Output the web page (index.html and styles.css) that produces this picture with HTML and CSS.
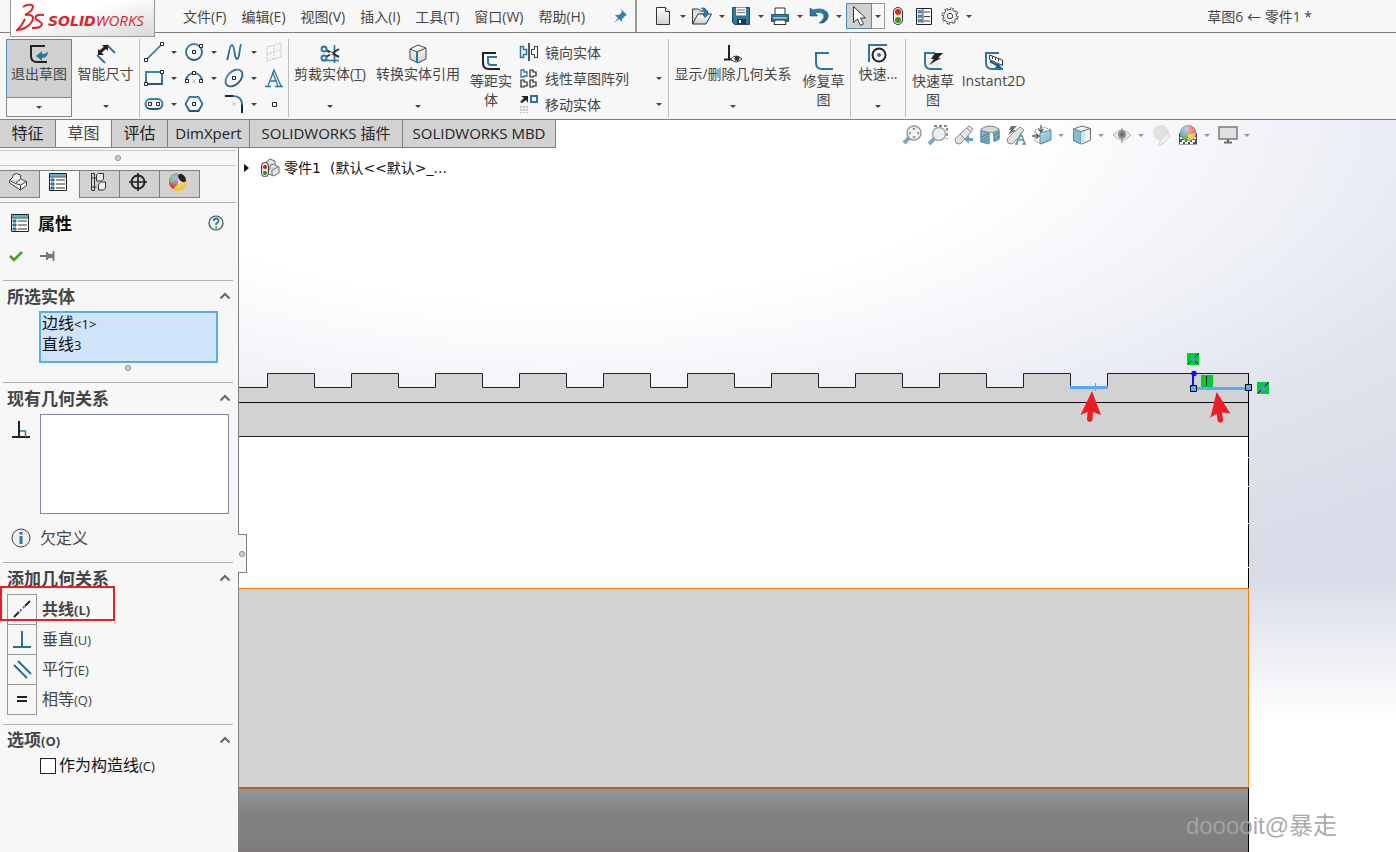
FILE: index.html
```html
<!DOCTYPE html>
<html lang="zh-CN">
<head>
<meta charset="utf-8">
<title>SOLIDWORKS</title>
<link rel="stylesheet" href="styles.css">
</head>
<body>
<svg class="defs" aria-hidden="true">
  <defs>
    <linearGradient id="blue" x1="0" y1="0" x2="0" y2="1"><stop offset="0" stop-color="#2f86b4"/><stop offset="1" stop-color="#245a78"/></linearGradient>
    <linearGradient id="light" x1="0" y1="0" x2="0" y2="1"><stop offset="0" stop-color="#ffffff"/><stop offset="1" stop-color="#cfcfcf"/></linearGradient>
    <linearGradient id="glass" x1="0" y1="0" x2="1" y2="1"><stop offset="0" stop-color="#aad8ee"/><stop offset="1" stop-color="#5fa8c8"/></linearGradient>
    <linearGradient id="base" gradientUnits="userSpaceOnUse" x1="0" y1="788" x2="0" y2="852"><stop offset="0" stop-color="#969696"/><stop offset="0.4" stop-color="#828282"/><stop offset="1" stop-color="#7f7b7d"/></linearGradient>
    <radialGradient id="shine" cx="0.4" cy="0.25" r="0.7"><stop offset="0" stop-color="#fff" stop-opacity="0.6"/><stop offset="1" stop-color="#fff" stop-opacity="0"/></radialGradient>
  </defs>
  <symbol id="i-exit" viewBox="0 0 20 20"><path d="M16 2H2v10q0 6 6 6h10" fill="none" stroke="#222" stroke-width="2"/><path d="M7 12l6-5v3q5 0 6-3 0 7-6 7v3z" fill="#2878a2"/></symbol>
  <symbol id="i-dim" viewBox="0 0 20 20"><path d="M1 11l8 8M11 1l8 8" stroke="#2b7399" stroke-width="1.800" fill="none"/><path d="M4 8l6-5" stroke="#222" stroke-width="3"/><path d="M2 11V5l6 6zM12 1v6L6 1z" fill="#222"/></symbol>
  <symbol id="i-line" viewBox="0 0 20 20"><path d="M2 18L18 2" stroke="#2878a2" stroke-width="1.7"/><path d="M.5 16.5h3v3h-3zM16.500.5h3v3h-3z" fill="#fff" stroke="#222"/></symbol>
  <symbol id="i-circle" viewBox="0 0 20 20"><circle cx="10" cy="10" r="8" fill="none" stroke="url(#blue)" stroke-width="1.8"/><path d="M8.500 8.500h3v3h-3zM15.500 2.500h3v3h-3z" fill="#fff" stroke="#222"/></symbol>
  <symbol id="i-spline" viewBox="0 0 20 20"><path d="M3 18C5 14 5 3 8 3s2 14 5 14 2-10 4-15" fill="none" stroke="url(#blue)" stroke-width="1.8"/></symbol>
  <symbol id="i-plane" viewBox="0 0 20 20"><path d="M3 5l14-4v14L3 19zM3 12l14-4M10 3v14" fill="none" stroke="#c4c4c4" stroke-dasharray="2 1"/></symbol>
  <symbol id="i-rect" viewBox="0 0 20 20"><path d="M2 4h16v12H2z" fill="none" stroke="url(#blue)" stroke-width="1.800"/><path d="M.5 14.500h3v3h-3zM16.500 2.500h3v3h-3z" fill="#fff" stroke="#222"/></symbol>
  <symbol id="i-arc" viewBox="0 0 20 20"><path d="M2 13a8 8 0 0 1 16 0" fill="none" stroke="url(#blue)" stroke-width="1.8"/><path d="M8 11l4 4m0-4l-4 4" stroke="#c4c4c4"/><path d="M1.500 11.500h3v3h-3zM15.500 11.500h3v3h-3zM8.500 3.500h3v3h-3z" fill="#fff" stroke="#222"/></symbol>
  <symbol id="i-ellipse" viewBox="0 0 20 20"><ellipse cx="10" cy="10" rx="10" ry="6.500" transform="rotate(-45 10 10)" fill="none" stroke="url(#blue)" stroke-width="1.8"/><path d="M8.500 8.500h3v3h-3z" fill="#fff" stroke="#222"/></symbol>
  <symbol id="i-text" viewBox="0 0 20 20"><path d="M1 18.500h6M11 18.500h8M4 18L10 2l7 16M8.500 4L14 18M6 13h7" fill="none" stroke="#2878a2" stroke-width="1.300"/></symbol>
  <symbol id="i-slot" viewBox="0 0 20 20"><rect x="1.500" y="5" width="17" height="10" rx="5" fill="none" stroke="url(#blue)" stroke-width="1.800"/><path d="M4.500 8.500h3v3h-3zM12.500 8.500h3v3h-3z" fill="#fff" stroke="#222"/></symbol>
  <symbol id="i-polygon" viewBox="0 0 20 20"><path d="M5.500 3h9l4 7-4 7h-9l-4-7z" fill="none" stroke="url(#blue)" stroke-width="1.800"/><path d="M8.500 8.500h3v3h-3z" fill="#fff" stroke="#222"/></symbol>
  <symbol id="i-fillet" viewBox="0 0 20 20"><path d="M1 2h8" stroke="#222" stroke-width="2"/><path d="M9 2q9 0 9 9" fill="none" stroke="url(#blue)" stroke-width="1.800"/><path d="M18 11v8" stroke="#222" stroke-width="2"/><path d="M8 8l4 4m0-4l-4 4" stroke="#c4c4c4"/></symbol>
  <symbol id="i-point" viewBox="0 0 20 20"><path d="M8.500 8.500h4v4h-4z" fill="#fff" stroke="#222"/></symbol>
  <symbol id="i-trim" viewBox="0 0 20 20"><path d="M14.500 1v18M2 16.500h17" stroke="#2878a2" stroke-width="1.700"/><path d="M6 6l13 7M6 13L19 5" stroke="#333" stroke-width="2"/><path d="M8 9.500l3-1.500 2 1.500-2 1.500z" fill="#fff"/><circle cx="4" cy="5" r="2.500" fill="none" stroke="#2878a2" stroke-width="2"/><circle cx="4" cy="14" r="2.500" fill="none" stroke="#2878a2" stroke-width="2"/></symbol>
  <symbol id="i-convert" viewBox="0 0 20 20"><path d="M2 5l8-4 8 3v11l-8 4-8-4z" fill="url(#light)" stroke="#444"/><path d="M2 5l7 3 9-4" fill="none" stroke="#444"/><path d="M9 8v11" stroke="#2878a2" stroke-width="2"/></symbol>
  <symbol id="i-offset" viewBox="0 0 20 20"><path d="M15 2H2v10q0 6 6 6h11" fill="none" stroke="#222" stroke-width="2"/><path d="M16 6H7v5q0 3 3 3h6" fill="none" stroke="#2878a2" stroke-width="2"/></symbol>
  <symbol id="i-mirror" viewBox="0 0 20 20"><path d="M1.500 4.500h3v3h3v5h-3v3h-3z" fill="none" stroke="#2878a2" stroke-width="1.500"/><path d="M10 1v18" stroke="#222" stroke-width="1.500"/><path d="M18.500 4.500h-3v3h-3v5h3v3h3z" fill="none" stroke="#333"/></symbol>
  <symbol id="i-pattern" viewBox="0 0 20 20"><path d="M2 2h3v2h3v4H5v1H2z" fill="none" stroke="#2878a2" stroke-width="1.300"/><path d="M11 2h3v2h3v4h-3v1h-3zM2 12h3v2h3v4H5v1H2zM11 12h3v2h3v4h-3v1h-3z" fill="none" stroke="#222" stroke-width="1.200"/></symbol>
  <symbol id="i-move" viewBox="0 0 20 20"><path d="M1 8l4-4-3-2h7v7L7 6 3 9z" fill="#222"/><path d="M12 2h6v6h-6z" fill="#fff" stroke="#2878a2" stroke-width="2"/><path d="M2 12v7M5 12v7M8 12v7" stroke="#c4c4c4" stroke-width="2" stroke-dasharray="2 1"/></symbol>
  <symbol id="i-relations" viewBox="0 0 20 20"><path d="M6 1v14M1 15.500h9" stroke="#222" stroke-width="2"/><path d="M8 15q5-6 11 0-6 6-11 0z" fill="#fff" stroke="#444"/><circle cx="14" cy="14.500" r="2.500" fill="#333"/></symbol>
  <symbol id="i-repair" viewBox="0 0 20 20"><path d="M15 2H2v10q0 6 6 6h11" fill="none" stroke="#2878a2" stroke-width="2"/></symbol>
  <symbol id="i-snap" viewBox="0 0 20 20"><path d="M1 18V1h18" fill="none" stroke="#2878a2" stroke-width="2"/><circle cx="11" cy="11" r="6.500" fill="none" stroke="#222" stroke-width="2"/><circle cx="11" cy="11" r="2" fill="#2878a2"/></symbol>
  <symbol id="i-rapid" viewBox="0 0 20 20"><path d="M4 8h15M4 13h15M9 3v16M14 6v13" stroke="#ddd"/><path d="M12 2H2v10q0 6 6 6h11" fill="none" stroke="#2878a2" stroke-width="2"/><path d="M12 2h8l-5 5h3L6 14l5-6H8z" fill="#222"/></symbol>
  <symbol id="i-instant" viewBox="0 0 20 20"><path d="M15 2H2v10q0 6 6 6h11" fill="none" stroke="#2878a2" stroke-width="2"/><path d="M5.500 4l13 5v5.500l-13-6z" fill="#fff" stroke="#333"/><path d="M8.500 5.500v2.500M11.500 6.500v2.500M14.500 8v2.500" stroke="#333"/><path d="M6 10.500l8 4" stroke="#245a78" stroke-width="2"/><path d="M18 17h-7l3-5z" fill="#245a78"/></symbol>
  <symbol id="i-pin" viewBox="0 0 20 20"><path d="M11 3l6 6-2 1-3 3v3l-3-3-5 4 4-5-3-3h4l3-3z" fill="#2f82ad"/></symbol>
  <symbol id="i-new" viewBox="0 0 20 20"><path d="M3.500 1.500h9l4 4v13h-13z" fill="url(#light)" stroke="#333"/><path d="M12.500 1.500v4h4" fill="#fff" stroke="#333"/></symbol>
  <symbol id="i-open" viewBox="0 0 20 20"><path d="M.5 18V3h6l2 2h7v3" fill="#ddd" stroke="#333"/><path d="M.5 18L6 8h13.500L14 18z" fill="url(#light)" stroke="#333"/><path d="M8 2q7-2 7 5h3l-5 5-4-5h3q0-4-4-5z" fill="#2878a2"/></symbol>
  <symbol id="i-save" viewBox="0 0 20 20"><path d="M1.500 1.500h17v17h-15l-2-2z" fill="#2878a2" stroke="#244a5d"/><path d="M5 1.500h10v8H5z" fill="#f4f4f4"/><path d="M6 4h8M6 6.500h8" stroke="#777"/><path d="M6 13h9v5H6z" fill="#333"/><path d="M8 14h2v3H8z" fill="#fff"/></symbol>
  <symbol id="i-print" viewBox="0 0 20 20"><path d="M5 9V2h10v7" fill="#fff" stroke="#333"/><path d="M1.500 8.500h17v7h-17z" fill="url(#blue)" stroke="#245a78"/><path d="M3 12h14" stroke="#fff"/><path d="M5 14h10l1 4.500H4z" fill="#fff" stroke="#333"/></symbol>
  <symbol id="i-undo" viewBox="0 0 20 20"><path d="M1 2v8h8L6 7q8-2 9 3 0 4-5 7h4q8-5 4-11Q13 1 4 4z" fill="url(#blue)" stroke="#245a78" stroke-width=".6"/></symbol>
  <symbol id="i-cursor" viewBox="0 0 20 20"><path d="M4.500.5v16l4-3.500 3 6.500 3-1.500-3-6h5z" fill="#fff" stroke="#333"/></symbol>
  <symbol id="i-light" viewBox="0 0 20 20"><rect x="5.500" y="1.500" width="9" height="17" rx="4.500" fill="#eee" stroke="#333"/><circle cx="10" cy="6" r="3" fill="#e3270c"/><circle cx="10" cy="14" r="3" fill="#35971d"/></symbol>
  <symbol id="i-list" viewBox="0 0 20 20"><path d="M2.500 2.500h15v16h-15z" fill="#fff" stroke="#222"/><path d="M4 4.500h4v2.500H4zM4 9h4v2.500H4zM4 13.500h4V16H4z" fill="#4aa3c7" stroke="#22617f" stroke-width=".6"/><path d="M10 6h6M10 10.500h6M10 15h6M9 3v14" stroke="#444"/></symbol>
  <symbol id="i-gear" viewBox="0 0 20 20"><circle cx="10" cy="10" r="7" fill="none" stroke="#444" stroke-width="3" stroke-dasharray="3.100 2.398"/><circle cx="10" cy="10" r="6.500" fill="#f7f7f7" stroke="#444"/><circle cx="10" cy="10" r="7" fill="none" stroke="#f7f7f7" stroke-width="1.500" stroke-dasharray="1.700 3.798" stroke-dashoffset="-.7"/><circle cx="10" cy="10" r="2.700" fill="none" stroke="#444"/></symbol>
  <symbol id="i-fit" viewBox="0 0 20 20"><path d="M2 18l7-7" stroke="#5b9fc0" stroke-width="4"/><circle cx="12" cy="8" r="7" fill="#f1f3f4" stroke="#888" stroke-width="1.500"/><path d="M12 2.500l1.800 2h-3.600zM12 13.500l1.800-2h-3.600zM6.500 8l2-1.800v3.600zM17.500 8l-2-1.800v3.600z" fill="#555"/></symbol>
  <symbol id="i-area" viewBox="0 0 20 20"><path d="M6 1h13v13" fill="none" stroke="#444" stroke-width="1.300" stroke-dasharray="3 2"/><path d="M1 19l6-6" stroke="#5b9fc0" stroke-width="4"/><circle cx="11" cy="9" r="6.500" fill="#e9edf0" stroke="#999" stroke-width="1.500"/></symbol>
  <symbol id="i-prev" viewBox="0 0 20 20"><path d="M1 14l6-6 8-7 4 3-6 8-7 7-4-1z" fill="#ddd" stroke="#777"/><path d="M6 9l5 5M13 3l4 4" stroke="#777"/><path d="M10 14.500l5-4v2.500h4v3h-4v2.500z" fill="#4c93b5"/></symbol>
  <symbol id="i-section" viewBox="0 0 20 20"><path d="M1 4q9-6 18 0v10l-5 2V8q-3-2-5 0v10l-8-1z" fill="#d4d4d4" stroke="#666"/><path d="M1 5.500l8 2v11.500l-8-2zM14 7l5-1.500v9l-5 2z" fill="#65a9c8" stroke="#477"/><path d="M2 12l6-4M2 16l6-5M4 17.500l4-3M14 11l5-4M14 15l5-4" stroke="#1f5975"/></symbol>
  <symbol id="i-annot" viewBox="0 0 20 20"><path d="M1 14l6-6 7-6 4 3-6 8-6 6-4-1z" fill="#ddd" stroke="#777"/><path d="M5 1h6L7 5h3L2 10l3-5H3z" fill="#555"/><path d="M9 19h3m4 0h4M10 19l5-10 4 10M12 15h6" fill="none" stroke="#3d88ae" stroke-width="1.700"/></symbol>
  <symbol id="i-orient" viewBox="0 0 20 20"><path d="M3 5l7-3 8 2v10l-8 5-7-3z" fill="#fff" stroke="#777" stroke-dasharray="2 1"/><path d="M8 8l11-3v10L8 19z" fill="url(#glass)" stroke="#477"/><path d="M9 0v6M0 11h6M6.500 4L9 7l2.500-3M4 8.500L7 11l-3 2.500" fill="none" stroke="#444" stroke-width="1.300"/></symbol>
  <symbol id="i-display" viewBox="0 0 20 20"><path d="M1.500 4L10 1l8.500 2.500V15L10 19l-8.500-3.500z" fill="#f0f0f0" stroke="#555"/><path d="M1.500 4L9 6.500V19l-7.500-3.500z" fill="#6fb3d0" stroke="#477"/><path d="M9 6.500L13 5v12l-4 2z" fill="#bfe0ee"/><path d="M9 6.500l9.500-3" stroke="#555"/></symbol>
  <symbol id="i-eye" viewBox="0 0 20 20"><path d="M1 10q9-10 18 0-9 10-18 0z" fill="#e8e8e8" stroke="#aaa"/><circle cx="10" cy="9.500" r="4" fill="#777"/><circle cx="10" cy="9.500" r="1.500" fill="#333"/><path d="M10 3v15" stroke="#666"/></symbol>
  <symbol id="i-appear" viewBox="0 0 20 20"><circle cx="9" cy="8" r="8" fill="#dedede"/><path d="M8 16l7-8 4 3-7 7-5 2z" fill="#efefef" stroke="#ccc"/></symbol>
  <symbol id="i-scene" viewBox="0 0 20 20"><path d="M1 8h18v11.500H1z" fill="#333"/><path d="M2 12h3v2H2zM15 12h3v2h-3zM4 15h3v2H4zM9 15h3v2H9zM14 15h3v2h-3zM2 17h3v2H2zM7 17h3v2H7zM12 17h3v2h-3z" fill="#fff"/><circle cx="10" cy="8" r="8" fill="#3f78c9"/><path d="M10 0a8 8 0 0 1 8 8l-8 1z" fill="#d8463b"/><path d="M2 8l8 1v7q-7-1-8-8z" fill="#3e9d3e"/><path d="M10 9l8-1q-1 7-8 8z" fill="#edb437"/><circle cx="10" cy="8" r="8" fill="url(#shine)"/></symbol>
  <symbol id="i-monitor" viewBox="0 0 20 20"><path d="M1 2h18v12H1z" fill="#ddd" stroke="#666" stroke-width="1.500"/><path d="M10 14v3M6 17.500h8" stroke="#555" stroke-width="2"/></symbol>
  <symbol id="i-part" viewBox="0 0 20 20"><path d="M1.500 8.500l3-3 1-3 3-1 4 1.500v4l6 2.500v4l-6 4.500-11-7zM1.500 8.500l6 3 5-4.500M12.500 13l6-3.500M12.500 13v5M7.500 11.500l5 1.500" fill="#eee" stroke="#444"/></symbol>
  <symbol id="i-config" viewBox="0 0 20 20"><path d="M3.500 1v17M3.500 6h5M3.500 15h5M3.500 1.500h3v17h-3" fill="none" stroke="#333"/><path d="M8.500 3l2-1.500h5V7l-2 2h-5zM10.500 12l2-2h5v6l-2 2h-5z" fill="#eee" stroke="#333"/></symbol>
  <symbol id="i-target" viewBox="0 0 20 20"><circle cx="10" cy="10" r="6.500" fill="none" stroke="#222" stroke-width="2"/><path d="M10 1v18M1 10h18" stroke="#222" stroke-width="1.700"/></symbol>
  <symbol id="i-ball" viewBox="0 0 20 20"><circle cx="10" cy="10" r="9" fill="#efc62e"/><path d="M10 1a9 9 0 0 0-9 9l9 2z" fill="#2e65b8"/><path d="M6 2a9 9 0 0 0-5 8l5 1z" fill="#3f9d3e"/><path d="M1 10l9 2-5 5q-4-3-4-7z" fill="#d8281f"/><path d="M10 1a9 9 0 0 1 9 9l-9 2z" fill="#e9c3ae"/><circle cx="10" cy="10" r="9" fill="url(#shine)"/><ellipse cx="14" cy="6" rx="3" ry="5" transform="rotate(-40 14 6)" fill="#222"/></symbol>
  <symbol id="i-props" viewBox="0 0 20 20"><path d="M1.500 1.500h17v17h-17z" fill="#fff" stroke="#222"/><path d="M2 2h16v2.500H2z" fill="#5db4d6"/><path d="M1 5h18M8 8h9M8 12h9M8 16h9" stroke="#333"/><path d="M3 7h3v2H3zM3 11h3v2H3zM3 15h3v2H3z" fill="#4aa3c7" stroke="#22617f"/></symbol>
  <symbol id="i-help" viewBox="0 0 20 20"><circle cx="10" cy="10" r="7" fill="#f3f3f3" stroke="#444" stroke-width="1.200"/><path d="M7.800 8q0-2.500 2.400-2.500T12.500 8q0 1.500-2.300 2.500V12M10.200 13.500v2" fill="none" stroke="#2878a2" stroke-width="1.800"/></symbol>
  <symbol id="i-ok" viewBox="0 0 20 20"><path d="M4 10l4 4 8-8" fill="none" stroke="#3fa31c" stroke-width="2.500"/></symbol>
  <symbol id="i-keep" viewBox="0 0 20 20"><path d="M1 10h7M8 6v8M14.500 5v10" stroke="#777" stroke-width="1.800"/><path d="M8 7q4 2 7 0v6q-3-2-7 0z" fill="#777"/></symbol>
  <symbol id="i-up" viewBox="0 0 20 20"><path d="M5.500 12.500L10 8l4.500 4.500" fill="none" stroke="#666" stroke-width="2"/></symbol>
  <symbol id="i-perp" viewBox="0 0 20 20"><path d="M8 1v16M1 17h18" stroke="#222" stroke-width="2"/><path d="M9 11h5.500v6" fill="none" stroke="#2878a2" stroke-width="1.500"/></symbol>
  <symbol id="i-info" viewBox="0 0 20 20"><circle cx="10" cy="10" r="9" fill="#eee" stroke="#444"/><path d="M10 4v2.500M10 8v8" stroke="#2878a2" stroke-width="3"/></symbol>
  <symbol id="i-collinear" viewBox="0 0 20 20"><path d="M2 18l5-5M13 7l5-5" stroke="#222" stroke-width="1.800"/><path d="M8 12l1.500-1.500M11 9l1.500-1.500" stroke="#2878a2" stroke-width="1.800"/></symbol>
  <symbol id="i-vert" viewBox="0 0 20 20"><path d="M10 2v16M1 18h18" stroke="#2b7095" stroke-width="2"/></symbol>
  <symbol id="i-parallel" viewBox="0 0 20 20"><path d="M6 2l13 13M2 6l13 13" stroke="#27698e" stroke-width="1.800"/></symbol>
  <symbol id="i-equal" viewBox="0 0 20 20"><path d="M5 8h10M5 12h10" stroke="#222" stroke-width="2"/></symbol>
  <symbol id="i-tree" viewBox="0 0 20 20"><path d="M6 4l4-3 5 2v4l4 2v6l-5 3-8-3z" fill="#e3e3e3" stroke="#666"/><path d="M10 7l5-1M12 12l6-3M12 12v6M10 7v5" stroke="#777"/><rect x="1.500" y="4.500" width="7" height="14" rx="3" fill="#ddd" stroke="#444"/><circle cx="5" cy="9" r="2" fill="#c81f12"/><circle cx="5" cy="15" r="2" fill="#2f8a1d"/></symbol>
  <symbol id="i-arrow" viewBox="0 0 22 32"><path d="M12 0l9 24-8-3-.5 8q-2.500 4-5.500 0l.500-8-7 3z" fill="#ee1c25"/></symbol>
</svg>

<header class="titlebar">
  <a class="logo" href="#" aria-label="SOLIDWORKS">
    <svg class="logo-mark" viewBox="0 0 30 30"><path d="M7 4C11 1 17 1 17 4 16 8 13 10 9 12M9 12C17 11 19 14 15 20 12 24 6 27 1 27 4 25 7 20 9 16M28 12C22 11 18 13 20 16 22 18 26 19 26 21 25 25 21 25 16 25" fill="none" stroke="#d8262c" stroke-width="2"/></svg>
    <span class="logo-text"><b>SOLID</b>WORKS</span>
  </a>
  <nav class="menu">
    <button>文件(F)</button><button>编辑(E)</button><button>视图(V)</button><button>插入(I)</button><button>工具(T)</button><button>窗口(W)</button><button>帮助(H)</button>
  </nav>
  <button class="pin" aria-label="固定"><svg class="icon"><use href="#i-pin"/></svg></button>
  <div class="quick">
    <button class="quick-btn" aria-label="新建"><svg class="icon"><use href="#i-new"/></svg><i class="caret"></i></button>
    <button class="quick-btn" aria-label="打开"><svg class="icon"><use href="#i-open"/></svg><i class="caret"></i></button>
    <button class="quick-btn" aria-label="保存"><svg class="icon"><use href="#i-save"/></svg><i class="caret"></i></button>
    <button class="quick-btn" aria-label="打印"><svg class="icon"><use href="#i-print"/></svg><i class="caret"></i></button>
    <button class="quick-btn" aria-label="撤销"><svg class="icon"><use href="#i-undo"/></svg><i class="caret"></i></button>
    <button class="select-btn" aria-label="选择"><svg class="icon"><use href="#i-cursor"/></svg></button>
    <button class="select-more" aria-label="选择方式"><i class="caret"></i></button>
    <button class="tool" aria-label="重建模型"><svg class="icon"><use href="#i-light"/></svg></button>
    <button class="tool" aria-label="文件属性"><svg class="icon"><use href="#i-list"/></svg></button>
    <button class="quick-btn options" aria-label="选项"><svg class="icon"><use href="#i-gear"/></svg><i class="caret"></i></button>
  </div>
  <h1 class="doc-title">草图6 ← 零件1 *</h1>
</header>

<div class="ribbon">
  <div class="exit">
    <button class="exit-main"><svg class="icon"><use href="#i-exit"/></svg>退出草图</button>
    <button class="exit-more" aria-label="更多"><i class="caret"></i></button>
  </div>
  <button class="cmd cmd-dim"><svg class="icon"><use href="#i-dim"/></svg>智能尺寸<i class="caret"></i></button>
  <div class="sketch-tools">
    <button aria-label="直线"><svg class="icon"><use href="#i-line"/></svg><i class="caret"></i></button>
    <button aria-label="圆"><svg class="icon"><use href="#i-circle"/></svg><i class="caret"></i></button>
    <button aria-label="样条曲线"><svg class="icon"><use href="#i-spline"/></svg><i class="caret"></i></button>
    <button aria-label="基准面"><svg class="icon"><use href="#i-plane"/></svg></button>
    <button aria-label="矩形"><svg class="icon"><use href="#i-rect"/></svg><i class="caret"></i></button>
    <button aria-label="圆弧"><svg class="icon"><use href="#i-arc"/></svg><i class="caret"></i></button>
    <button aria-label="椭圆"><svg class="icon"><use href="#i-ellipse"/></svg><i class="caret"></i></button>
    <button aria-label="文字"><svg class="icon"><use href="#i-text"/></svg></button>
    <button aria-label="槽口"><svg class="icon"><use href="#i-slot"/></svg><i class="caret"></i></button>
    <button aria-label="多边形"><svg class="icon"><use href="#i-polygon"/></svg></button>
    <button aria-label="圆角"><svg class="icon"><use href="#i-fillet"/></svg><i class="caret"></i></button>
    <button aria-label="点"><svg class="icon"><use href="#i-point"/></svg></button>
  </div>
  <button class="cmd cmd-trim"><svg class="icon"><use href="#i-trim"/></svg><span>剪裁实体(<u>T</u>)</span><i class="caret"></i></button>
  <button class="cmd cmd-convert"><svg class="icon"><use href="#i-convert"/></svg>转换实体引用<i class="caret"></i></button>
  <button class="cmd cmd-low cmd-offset"><svg class="icon"><use href="#i-offset"/></svg>等距实<br>体</button>
  <div class="cmd-list">
    <button><svg class="icon"><use href="#i-mirror"/></svg><span>镜向实体</span></button>
    <button><svg class="icon"><use href="#i-pattern"/></svg><span>线性草图阵列</span><i class="caret"></i></button>
    <button><svg class="icon"><use href="#i-move"/></svg><span>移动实体</span><i class="caret"></i></button>
  </div>
  <button class="cmd cmd-relations"><svg class="icon"><use href="#i-relations"/></svg>显示/删除几何关系<i class="caret"></i></button>
  <button class="cmd cmd-low cmd-repair"><svg class="icon"><use href="#i-repair"/></svg>修复草<br>图</button>
  <button class="cmd cmd-snap"><svg class="icon"><use href="#i-snap"/></svg>快速...<i class="caret"></i></button>
  <button class="cmd cmd-low cmd-rapid"><svg class="icon"><use href="#i-rapid"/></svg>快速草<br>图</button>
  <button class="cmd cmd-low cmd-instant"><svg class="icon"><use href="#i-instant"/></svg>Instant2D</button>
</div>

<main class="workspace">
  <div class="tabbar">
    <nav class="tabs">
      <button>特征</button><button class="active">草图</button><button>评估</button><button>DimXpert</button><button>SOLIDWORKS 插件</button><button>SOLIDWORKS MBD</button>
    </nav>
    <div class="view-tools">
      <button aria-label="整屏显示全图"><svg class="icon"><use href="#i-fit"/></svg></button>
      <button aria-label="局部放大"><svg class="icon"><use href="#i-area"/></svg></button>
      <button aria-label="上一视图"><svg class="icon"><use href="#i-prev"/></svg></button>
      <button aria-label="剖面视图"><svg class="icon"><use href="#i-section"/></svg></button>
      <button aria-label="动态注解视图"><svg class="icon"><use href="#i-annot"/></svg></button>
      <button class="drop" aria-label="视图定向"><svg class="icon"><use href="#i-orient"/></svg><i class="caret"></i></button>
      <button class="drop" aria-label="显示样式"><svg class="icon"><use href="#i-display"/></svg><i class="caret"></i></button>
      <button class="drop" aria-label="隐藏/显示项目"><svg class="icon"><use href="#i-eye"/></svg><i class="caret"></i></button>
      <button aria-label="编辑外观"><svg class="icon"><use href="#i-appear"/></svg></button>
      <button class="drop" aria-label="应用布景"><svg class="icon"><use href="#i-scene"/></svg><i class="caret"></i></button>
      <button class="drop" aria-label="视图设置"><svg class="icon"><use href="#i-monitor"/></svg><i class="caret"></i></button>
    </div>
  </div>

  <div class="body">
    <aside class="panel">
      <div class="grip"><i class="dot"></i></div>
      <nav class="panel-tabs">
        <button aria-label="设计树"><svg class="icon"><use href="#i-part"/></svg></button>
        <button class="active" aria-label="属性"><svg class="icon"><use href="#i-props"/></svg></button>
        <button aria-label="配置"><svg class="icon"><use href="#i-config"/></svg></button>
        <button aria-label="尺寸专家"><svg class="icon"><use href="#i-target"/></svg></button>
        <button aria-label="外观"><svg class="icon"><use href="#i-ball"/></svg></button>
      </nav>
      <div class="panel-head">
        <svg class="icon"><use href="#i-props"/></svg><h2>属性</h2>
        <button aria-label="帮助"><svg class="icon"><use href="#i-help"/></svg></button>
      </div>
      <div class="confirm">
        <button aria-label="确定"><svg class="icon"><use href="#i-ok"/></svg></button>
        <button aria-label="保持可见"><svg class="icon"><use href="#i-keep"/></svg></button>
      </div>

      <section class="group">
        <button class="group-head">所选实体<svg class="icon"><use href="#i-up"/></svg></button>
        <ul class="selected">
          <li>边线<small>&lt;1&gt;</small></li>
          <li>直线<small>3</small></li>
        </ul>
        <div class="resize"><i class="dot"></i></div>
      </section>

      <section class="group">
        <button class="group-head">现有几何关系<svg class="icon"><use href="#i-up"/></svg></button>
        <div class="existing">
          <svg class="icon"><use href="#i-perp"/></svg>
          <ul class="relations" aria-label="现有几何关系"></ul>
        </div>
        <p class="status"><svg class="icon"><use href="#i-info"/></svg>欠定义</p>
      </section>

      <section class="group">
        <button class="group-head">添加几何关系<svg class="icon"><use href="#i-up"/></svg></button>
        <div class="add">
          <button class="strong"><span class="key"><svg class="icon"><use href="#i-collinear"/></svg></span>共线<small>(L)</small></button>
          <button><span class="key"><svg class="icon"><use href="#i-vert"/></svg></span>垂直<small>(U)</small></button>
          <button><span class="key"><svg class="icon"><use href="#i-parallel"/></svg></span>平行<small>(E)</small></button>
          <button><span class="key"><svg class="icon"><use href="#i-equal"/></svg></span>相等<small>(Q)</small></button>
          <div class="highlight"></div>
        </div>
      </section>

      <section class="group">
        <button class="group-head"><span>选项<small>(O)</small></span><svg class="icon"><use href="#i-up"/></svg></button>
        <div class="option"><input type="checkbox" id="construction"><label for="construction">作为构造线<small>(C)</small></label></div>
      </section>
      <button class="collapse" aria-label="折叠面板"><i class="dot"></i></button>
    </aside>

    <div class="viewport">
      <svg class="scene" role="img" aria-label="零件草图">
        <g transform="translate(-239 -148)">
          <path d="M230 387.500H267.500V373.500H314.500V387.500H351.500V373.500H398.500V387.500H435.500V373.500H482.500V387.500H519.500V373.500H566.500V387.500H603.500V373.500H650.500V387.500H687.500V373.500H734.500V387.500H771.500V373.500H818.500V387.500H855.500V373.500H902.500V387.500H939.500V373.500H986.500V387.500H1023.500V373.500H1070.500V387.500H1107.500V373.500H1248.500V436.500H230Z" fill="#d2d2d2" stroke="#222"/>
          <path d="M239 437h1009v151H239z" fill="#fff"/>
          <path d="M239 402.500h1009" stroke="#111"/>
          <path d="M239 788h1009v64H239z" fill="url(#base)"/>
          <path d="M239 852h1009v400H239z" fill="#7f7b7d"/>
          <path d="M1248.500 373v879" stroke="#000"/>
          <path d="M1247 457.500h3M1247 486.500h3M1247 523.500h3M1247 567.500h3" stroke="#fff"/>
          <path d="M230 588.500h1018.500v199H230z" fill="#d2d2d2" stroke="#f5820a"/>
          <path d="M239 788h1009" stroke="#b0641f" stroke-width="2"/>
          <path d="M1070 387.500h38M1193 388.500h52" stroke="#58a8fb" stroke-width="3"/>
          <path d="M1095.500 383v8" stroke="#58a8fb"/>
          <path d="M1193 374v14" stroke="#1010f4" stroke-width="2"/><circle cx="1194" cy="373.500" r="2.800" fill="#1010f4"/>
          <path d="M1190.500 385.500h6v6h-6zM1245.500 384.500h6v6h-6z" fill="#58a8fb" stroke="#000"/>
          <path d="M1187 353h12v12h-12zM1201 375h12v12h-12zM1257 382h12v12h-12z" fill="#00cc33"/>
          <path d="M1188 364l11-11M1193 359l5 5M1258 393l11-11M1206.500 376v10" stroke="#111"/>
          <circle cx="1193.500" cy="359.500" r="2.500" fill="#4d8ff2"/><circle cx="1263.500" cy="388.500" r="2.500" fill="#4d8ff2"/>
          <use href="#i-arrow" x="1080" y="391" width="22" height="32"/>
          <use href="#i-arrow" x="1208" y="392" width="22" height="32" transform="rotate(-12 1218 408)"/>
        </g>
      </svg>
      <div class="tree"><i class="twisty"></i><svg class="icon"><use href="#i-tree"/></svg><span>零件1</span><span>(默认&lt;&lt;默认&gt;_...</span></div>
      <div class="watermark">dooooit@暴走</div>
    </div>
  </div>
</main>
</body>
</html>
```
FILE: styles.css
```css
* { box-sizing: border-box; }

body {
  margin: 0;
  height: 100vh;
  display: flex;
  flex-direction: column;
  overflow: hidden;
  background: #f7f7f7;
  color: #454545;
  font: 14px/19px "Open Sans", "Noto Sans CJK SC", sans-serif;
}

button {
  margin: 0;
  padding: 0;
  border: 0;
  background: none;
  color: inherit;
  font: inherit;
}

ul, h1, h2, p { margin: 0; padding: 0; list-style: none; font-weight: 400; }

.defs { position: absolute; width: 0; height: 0; }
.icon { display: block; flex: none; width: 20px; height: 20px; }

.caret {
  width: 0;
  height: 0;
  border: 3px solid transparent;
  border-top-color: #444;
  border-bottom: 0;
}

.dot {
  width: 6px;
  height: 6px;
  border: 1px solid #888;
  border-radius: 50%;
  background: #d4d4d4;
}

/* Title bar */
.titlebar {
  position: relative;
  z-index: 2;
  flex: none;
  display: flex;
  align-items: center;
  height: 33px;
  padding-left: 183px;
  border-bottom: 1px solid #808080;
}

.logo {
  position: absolute;
  left: 10px;
  top: -1px;
  display: flex;
  align-items: center;
  gap: 2px;
  width: 145px;
  height: 38px;
  padding-left: 5px;
  border: 1px solid #999;
  background: linear-gradient(165deg, #fff 40%, #d8d8d8);
  color: #d8262c;
  text-decoration: none;
}

.logo-mark { flex: none; width: 30px; height: 30px; }
.logo-text { font: italic 15px/20px "Open Sans", sans-serif; padding-top: 4px; }
.logo-text b { font: italic 700 14px/20px "DejaVu Sans", sans-serif; }

.menu { display: flex; gap: 15px; }
.pin { margin-left: 25px; }

.quick {
  display: flex;
  align-items: center;
  height: 32px;
  margin-left: 5px;
  padding-left: 14px;
  border-left: 2px solid #999;
}

.quick-btn { display: flex; align-items: center; gap: 7px; width: 39px; padding-left: 2px; }
.quick .options { padding: 0; gap: 6px; }
.select-btn { width: 26px; height: 26px; padding-left: 2px; border: 1px solid #4a90bd; background: #d0d0d0; }
.select-more { display: grid; place-items: center; width: 13px; height: 26px; border: 1px solid #999; border-left: 0; }
.tool { width: 26px; }
.select-more + .tool { margin-left: 3px; }
.doc-title { margin-left: auto; padding-right: 84px; font-size: 14px; }

/* Ribbon */
.ribbon {
  flex: none;
  display: flex;
  height: 87px;
  padding: 6px 0 2px 6px;
  border-bottom: 1px solid #808080;
}

.exit { display: flex; flex-direction: column; width: 66px; }
.exit-main {
  display: flex;
  flex-direction: column;
  align-items: center;
  height: 59px;
  padding-top: 4px;
  border: 1px solid #4a90bd;
  border-bottom-color: #888;
  background: #d0d0d0;
}
.exit-more { display: grid; place-items: center; height: 19px; border: 1px solid #888; border-top: 0; }

.cmd {
  flex: none;
  display: flex;
  flex-direction: column;
  align-items: center;
  padding: 5px 0 9px;
  white-space: nowrap;
}
.cmd .caret { margin-top: auto; }
.cmd-low { padding: 12px 0 0; }
.cmd-dim { width: 67px; }
.cmd-trim { width: 82px; }
.cmd-convert { width: 94px; }
.cmd-offset { width: 52px; }
.cmd-relations { width: 129px; border-left: 1px solid #c0c0c0; }
.cmd-repair { width: 53px; }
.cmd-snap { width: 55px; border-left: 1px solid #c0c0c0; }
.cmd-rapid { width: 55px; border-left: 1px solid #c0c0c0; }
.cmd-instant { width: 67px; }

.sketch-tools {
  display: grid;
  grid-template-columns: repeat(3, 40px) 24px;
  grid-auto-rows: 26px;
  padding-left: 4px;
  border: solid #c0c0c0;
  border-width: 0 1px;
}
.sketch-tools button { display: flex; align-items: center; gap: 7px; }

.cmd-list { display: grid; grid-auto-rows: 26px; width: 151px; padding-left: 2px; }
.cmd-list button { display: flex; align-items: center; gap: 6px; }
.cmd-list .caret { margin-left: auto; margin-right: 6px; }

/* Workspace */
.workspace {
  flex: 1;
  min-height: 0;
  display: flex;
  flex-direction: column;
  background:
    linear-gradient(to bottom, rgba(255, 255, 255, 0) 62%, #fff 82%),
    radial-gradient(ellipse 93% 71% at 40% 0, #fff 35%, #eff1f7 58%, #e0e4ee 76%, #d9dce8 100%);
}

.tabbar { display: flex; align-items: flex-start; flex: none; height: 28px; }
.tabs { display: flex; font-size: 15px; }
.tabs button {
  width: 153px;
  height: 28px;
  border: solid #808080;
  border-width: 0 1px 1px 0;
  background: #d2d2d2;
  color: #222;
  white-space: nowrap;
}
.tabs button:nth-child(-n+3) { width: 56px; font-size: 16px; }
.tabs button:nth-child(4) { width: 82px; }
.tabs .active { background: #f7f7f7; color: #454545; }

.view-tools { display: flex; gap: 6px; margin-left: auto; padding: 5px 144px 0 0; opacity: 0.85; }
.drop { display: flex; align-items: center; gap: 6px; width: 34px; }
.drop .caret { border-top-color: #888; }

.body { flex: 1; min-height: 0; display: flex; }

/* Property panel */
.panel {
  position: relative;
  z-index: 1;
  flex: none;
  width: 239px;
  padding-top: 2px;
  border-right: 1px solid #808080;
  background: #f7f7f7;
}

.grip {
  display: grid;
  place-items: center;
  height: 16px;
  margin-right: 2px;
  border: solid #c8c8c8;
  border-width: 1px 0;
}

.panel-tabs {
  display: flex;
  height: 37px;
  margin-right: 2px;
  padding-top: 4px;
  border-bottom: 1px solid #b0b0b0;
}
.panel-tabs button {
  display: flex;
  justify-content: center;
  width: 40px;
  height: 28px;
  padding: 1px 3px 0 0;
  border: 1px solid #808080;
  border-left: 0;
  background: #d2d2d2;
}
.panel-tabs .active { border-bottom: 0; background: #f7f7f7; }

.panel-head { display: flex; align-items: center; gap: 8px; height: 40px; padding: 0 12px 0 10px; }
.panel-head h2 { flex: 1; color: #111; font-size: 17px; font-weight: 700; }
.confirm { display: flex; align-items: flex-start; gap: 13px; height: 37px; padding: 3px 0 0 6px; }

.group { margin: 0 5px 0 3px; padding-top: 4px; border-top: 1px solid #b0b0b0; font-size: 16px; }
.group small { font-size: 13px; }
.group-head {
  display: flex;
  align-items: center;
  justify-content: space-between;
  width: 100%;
  height: 22px;
  margin-bottom: 2px;
  padding-left: 4px;
  font-size: 17px;
  font-weight: 700;
}
.group-head .icon { margin-right: -2px; }

.selected {
  height: 52px;
  margin: 0 15px 0 36px;
  padding-left: 1px;
  border: 2px solid #57aee0;
  background: #cfe4f8;
  color: #111;
  line-height: 20px;
}
.group-head + .selected { margin-top: 4px; }
.resize { display: grid; place-items: center; height: 19px; padding: 0 19px 9px 38px; }

.existing { display: flex; gap: 9px; padding-left: 8px; }
.existing .icon { margin-top: 9px; }
.relations { flex: 1; height: 100px; margin: 3px 4px 0 0; border: 1px solid #8088a0; background: #fff; }
.status { display: flex; align-items: center; gap: 9px; height: 48px; padding-left: 8px; }

.add { position: relative; padding: 3px 0 10px 4px; }
.add button { display: flex; align-items: center; height: 30px; }
.key { display: grid; place-items: center; width: 30px; height: 31px; margin-right: 5px; border: 1px solid #999; }
.add .strong { font-weight: 700; }
.add small { padding-top: 2px; }
.highlight { position: absolute; left: -3px; top: -5px; width: 115px; height: 35px; border: 2px solid #ee1c25; }

.option { display: flex; align-items: center; gap: 3px; height: 26px; padding-left: 37px; color: #111; }
.option input { appearance: none; width: 16px; height: 16px; margin: 0; border: 1px solid #222; background: #fff; }

.collapse {
  position: absolute;
  left: 238px;
  top: 386px;
  display: grid;
  place-items: center;
  width: 9px;
  height: 39px;
  border: 1px solid #808080;
  border-left: 0;
  background: #f7f7f7;
}

/* Graphics area */
.viewport { position: relative; flex: 1; min-width: 0; overflow: hidden; }
.scene { position: absolute; width: 100%; height: 100%; }
.tree {
  position: relative;
  display: flex;
  align-items: center;
  height: 40px;
  padding-left: 5px;
  color: #111;
  font-family: "DejaVu Sans", "Noto Sans CJK SC", sans-serif;
}
.tree .icon { margin: 0 4px 0 11px; }
.tree span + span { margin-left: 9px; }
.twisty { width: 0; height: 0; border: 4px solid transparent; border-left: 5px solid #111; border-right: 0; }
.watermark {
  position: absolute;
  right: 59px;
  bottom: 10px;
  color: rgba(165, 165, 165, 0.95);
  font: 24px/32px "Liberation Sans", "Noto Sans CJK SC", sans-serif;
}
```
